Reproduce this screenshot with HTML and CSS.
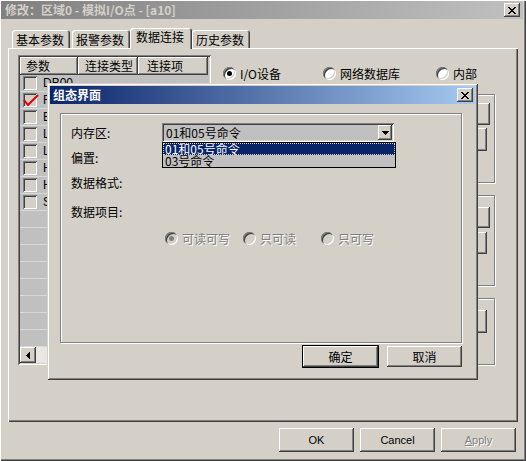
FILE: index.html
```
<!DOCTYPE html>
<html>
<head>
<meta charset="utf-8">
<link rel="stylesheet" href="styles.css">
</head>
<body>
<div class="win">
  <div class="titlebar">
    <span class="title">修改：区域0 - 模拟I/O点 - [a10]</span>
    <span class="capbtn"><svg width="8" height="7" viewBox="0 0 8 7" shape-rendering="crispEdges"><path d="M0 0h2v1h1v1h2v-1h1v-1h2v1h-1v1h-1v1h-1v1h1v1h1v1h1v1h-2v-1h-1v-1h-2v1h-1v1h-2v-1h1v-1h1v-1h1v-1h-1v-1h-1v-1h-1z"/></svg></span>
  </div>
  <div class="tabs">
    <div class="tab">基本参数</div>
    <div class="tab">报警参数</div>
    <div class="tab sel">数据连接</div>
    <div class="tab">历史参数</div>
  </div>
  <div class="panel">
    <div class="list">
      <div class="lhead">
        <div class="hc c1">参数</div>
        <div class="hc c2">连接类型</div>
        <div class="hc c3">连接项</div>
      </div>
      <div class="lbody">
        <div class="row"><span class="chk"></span><span class="rt">DB00</span></div>
        <div class="row"><span class="chk"><svg class="tick" width="16" height="13" viewBox="0 0 16 13"><polyline points="1,6 5,11 15,1" fill="none" stroke="#e00000" stroke-width="2"/></svg></span><span class="rt">F</span></div>
        <div class="row"><span class="chk"></span><span class="rt">E</span></div>
        <div class="row"><span class="chk"></span><span class="rt">L</span></div>
        <div class="row"><span class="chk"></span><span class="rt">L</span></div>
        <div class="row"><span class="chk"></span><span class="rt">H</span></div>
        <div class="row"><span class="chk"></span><span class="rt">H</span></div>
        <div class="row"><span class="chk"></span><span class="rt">S</span></div>
        <div class="row"></div>
        <div class="row"></div>
        <div class="row"></div>
        <div class="row"></div>
        <div class="row"></div>
        <div class="row"></div>
        <div class="row"></div>
        <div class="row"></div>
      </div>
      <div class="hscroll">
        <span class="sbtn"><svg width="4" height="7" viewBox="0 0 4 7" shape-rendering="crispEdges"><path d="M3 0h1v7h-1v-1h-1v-1h-1v-1h-1v-1h1v-1h1v-1h1z"/></svg></span>
        <span class="track"></span>
      </div>
    </div>
    <div class="side">
      <div class="src">
        <label class="radio r1"><i class="dot on"></i>I/O设备</label>
        <label class="radio r2"><i class="dot"></i>网络数据库</label>
        <label class="radio"><i class="dot"></i>内部</label>
      </div>
      <div class="grp g1">
        <div class="btn gb1"></div>
        <div class="btn gb2"></div>
      </div>
      <div class="grp g2">
        <div class="btn gb3"></div>
        <div class="btn gb4"></div>
      </div>
      <div class="grp g3">
        <div class="btn gb5"></div>
      </div>
    </div>
  </div>
  <div class="footer">
    <div class="btn fbtn">OK</div>
    <div class="btn fbtn">Cancel</div>
    <div class="btn fbtn dis"><u>A</u>pply</div>
  </div>

  <div class="dlg">
    <div class="dtitle">
      <span>组态界面</span>
      <span class="capbtn"><svg width="8" height="7" viewBox="0 0 8 7" shape-rendering="crispEdges"><path d="M0 0h2v1h1v1h2v-1h1v-1h2v1h-1v1h-1v1h-1v1h1v1h1v1h1v1h-2v-1h-1v-1h-2v1h-1v1h-2v-1h1v-1h1v-1h1v-1h-1v-1h-1v-1h-1z"/></svg></span>
    </div>
    <div class="dgrp">
      <div class="frow">
        <span class="flabel">内存区:</span>
        <div class="combo">
          <span class="ctext">01和05号命令</span>
          <span class="cbtn"><svg width="7" height="4" viewBox="0 0 7 4" shape-rendering="crispEdges"><path d="M0 0h7v1h-1v1h-1v1h-1v1h-1v-1h-1v-1h-1v-1h-1z"/></svg></span>
          <div class="drop">
            <div class="opt hl">01和05号命令</div>
            <div class="opt">03号命令</div>
          </div>
        </div>
      </div>
      <div class="frow f2"><span class="flabel">偏置:</span></div>
      <div class="frow f3"><span class="flabel">数据格式:</span></div>
      <div class="frow f4"><span class="flabel">数据项目:</span></div>
      <div class="frow f5">
        <label class="radio dr"><i class="dot dis on"></i><span class="gtext">可读可写</span></label>
        <label class="radio dr"><i class="dot dis"></i><span class="gtext">只可读</span></label>
        <label class="radio"><i class="dot dis"></i><span class="gtext">只可写</span></label>
      </div>
    </div>
    <div class="dbtns">
      <div class="btn dbtn def">确定</div>
      <div class="btn dbtn">取消</div>
    </div>
  </div>
</div>
</body>
</html>
```
FILE: styles.css
```
* { box-sizing: border-box; margin: 0; padding: 0; }
html, body { width: 526px; height: 461px; overflow: hidden; }
body {
  background: #d4d0c8;
  font-family: "Noto Sans CJK SC", "Liberation Sans", sans-serif;
  font-size: 12px;
  line-height: 12px;
  color: #000;
}

.win {
  position: relative;
  width: 526px;
  height: 461px;
  padding: 1px 3px 3px 1px;
  box-shadow: inset 1px 1px #fff, inset -1px -1px #404040, inset -2px -2px #808080;
}

.titlebar {
  height: 18px;
  display: flex;
  align-items: center;
  justify-content: space-between;
  padding: 0 3px 0 4px;
  background: linear-gradient(90deg, #808080, #c0c0c0);
}
.title { color: #d4d0c8; font-weight: bold; }

.capbtn {
  width: 16px;
  height: 14px;
  display: flex;
  align-items: center;
  justify-content: center;
  background: #d4d0c8;
  box-shadow: inset -1px -1px #404040, inset 1px 1px #fff, inset -2px -2px #808080;
}
.capbtn svg { display: block; }

.btn {
  background: #d4d0c8;
  box-shadow: inset -1px -1px #404040, inset 1px 1px #fff, inset -2px -2px #808080;
}

/* tabs */
.tabs {
  display: flex;
  align-items: flex-end;
  height: 20px;
  margin-top: 9px;
  padding-left: 11px;
  position: relative;
  z-index: 1;
}
.tab {
  width: 58px;
  height: 18px;
  margin-right: 2px;
  padding: 4px 0 0 4px;
  background: #d4d0c8;
  border-radius: 3px 3px 0 0;
  box-shadow: inset 1px 1px #fff, inset -1px 0 #404040, inset -2px 0 #808080;
}
.tab.sel {
  width: 62px;
  height: 21px;
  margin: 0 0 -1px -2px;
  padding: 3px 0 0 6px;
}

/* tab panel */
.panel {
  margin-left: 7px;
  width: 510px;
  height: 374px;
  padding: 1px;
  display: flex;
  align-items: flex-start;
  box-shadow: inset 1px 1px #fff, inset -1px -1px #404040, inset -2px -2px #808080;
}

.list {
  margin: 6px 0 0 9px;
  width: 193px;
  height: 310px;
  padding: 2px;
  background: #c0c0c0;
  display: flex;
  flex-direction: column;
  box-shadow: inset 1px 1px #808080, inset -1px -1px #fff, inset 2px 2px #404040, inset -2px -2px #d4d0c8;
}
.lhead { display: flex; height: 18px; flex: none; }
.hc {
  height: 18px;
  padding: 3px 0 0 6px;
  background: #d4d0c8;
  box-shadow: inset -1px -1px #404040, inset 1px 1px #fff, inset -2px -2px #808080;
}
.c1 { width: 58px; }
.c2 { width: 60px; padding-left: 7px; }
.c3 { width: 70px; padding-left: 9px; }
.lbody { flex: 1; overflow: hidden; }
.row {
  height: 17px;
  border-bottom: 1px solid #d8d8d8;
  display: flex;
  align-items: center;
  padding-left: 3px;
}
.chk {
  position: relative;
  width: 14px;
  height: 14px;
  background: #d4d0c8;
  box-shadow: inset 1px 1px #808080, inset -1px -1px #fff, inset 2px 2px #404040, inset -2px -2px #d4d0c8;
}
.tick { position: absolute; left: 0; top: 1px; }
.rt { margin-left: 6px; font-family: "Liberation Sans", sans-serif; font-size: 12px; }

.hscroll { height: 16px; display: flex; flex: none; }
.sbtn {
  width: 16px;
  height: 16px;
  display: flex;
  align-items: center;
  justify-content: center;
  background: #d4d0c8;
  box-shadow: inset -1px -1px #404040, inset 1px 1px #fff, inset -2px -2px #808080;
}
.sbtn svg { display: block; margin-left: -1px; }
.track { flex: 1; background: #e9e7e3; }

/* right side */
.side {
  margin-left: 11px;
  width: 273px;
  display: flex;
  flex-direction: column;
}
.src {
  display: flex;
  align-items: center;
  height: 13px;
  margin-top: 18px;
}
.radio { display: flex; align-items: center; gap: 4px; }
.r1 { width: 100px; margin-left: 1px; }
.r2 { width: 113px; }
.dot {
  position: relative;
  display: block;
  width: 13px;
  height: 13px;
  border-radius: 50%;
  background: #fff;
  box-shadow: inset 1px 1px #808080, inset -1px -1px #fff, inset 2px 2px #404040, inset -2px -2px #d4d0c8;
}
.dot.on::after {
  content: "";
  position: absolute;
  left: 4px;
  top: 4px;
  width: 5px;
  height: 5px;
  border-radius: 50%;
  background: #000;
}
.dot.dis { background: #d4d0c8; }
.dot.dis.on::after { background: #808080; }

.grp {
  border: 1px solid #808080;
  box-shadow: 1px 1px #fff, inset 1px 1px #fff;
  display: flex;
  flex-direction: column;
  align-items: flex-end;
}
.g1 { margin-top: 14px; height: 89px; }
.g2 { margin-top: 12px; height: 91px; }
.g3 { margin-top: 12px; height: 67px; }
.gb1 { width: 60px; height: 22px; margin: 8px 4px 0 0; }
.gb2 { width: 60px; height: 23px; margin: 3px 7px 0 0; }
.gb3 { width: 60px; height: 21px; margin: 11px 4px 0 0; }
.gb4 { width: 60px; height: 22px; margin: 4px 7px 0 0; }
.gb5 { width: 60px; height: 23px; margin: 11px 7px 0 0; }

/* footer */
.footer {
  display: flex;
  justify-content: flex-end;
  gap: 6px;
  margin-top: 6px;
  padding-right: 7px;
}
.fbtn {
  width: 75px;
  height: 24px;
  display: flex;
  align-items: center;
  justify-content: center;
  font-family: "Liberation Sans", sans-serif;
  font-size: 11px;
}
.fbtn.dis { color: #808080; text-shadow: 1px 1px #fff; }

/* dialog */
.dlg {
  position: absolute;
  left: 47px;
  top: 83px;
  width: 431px;
  height: 297px;
  padding: 3px;
  background: #d4d0c8;
  z-index: 5;
  box-shadow: inset 1px 1px #d4d0c8, inset -1px -1px #404040, inset 2px 2px #fff, inset -2px -2px #808080;
}
.dtitle {
  height: 18px;
  display: flex;
  align-items: center;
  justify-content: space-between;
  padding: 0 2px 0 3px;
  background: linear-gradient(90deg, #0a246a, #a6caf0);
  color: #fff;
  font-weight: bold;
}
.dgrp {
  margin: 9px 0 0 10px;
  width: 402px;
  height: 230px;
  padding: 9px 0 0 10px;
  border: 1px solid #808080;
  box-shadow: 1px 1px #fff, inset 1px 1px #fff;
}
.frow { display: flex; align-items: center; height: 19px; }
.f2 { margin-top: 6px; }
.f3 { margin-top: 6px; }
.f4 { margin-top: 10px; }
.f5 { margin-top: 8px; padding-left: 94px; }
.flabel { width: 91px; flex: none; }

.combo {
  position: relative;
  width: 232px;
  height: 19px;
  padding: 2px;
  display: flex;
  align-items: center;
  background: #c0c0c0;
  box-shadow: inset 1px 1px #808080, inset -1px -1px #fff, inset 2px 2px #404040, inset -2px -2px #d4d0c8;
}
.ctext { flex: 1; padding-left: 2px; }
.cbtn {
  width: 14px;
  height: 15px;
  display: flex;
  align-items: center;
  justify-content: center;
  background: #d4d0c8;
  box-shadow: inset -1px -1px #404040, inset 1px 1px #fff, inset -2px -2px #808080;
}
.cbtn svg { display: block; }
.drop {
  position: absolute;
  left: 0;
  top: 19px;
  width: 234px;
  height: 26px;
  border: 1px solid #000;
  background: #c0c0c0;
}
.opt { height: 12px; line-height: 12px; padding-left: 2px; }
.opt.hl {
  background: #0a246a;
  color: #fff;
  outline: 1px dotted #d4d0c8;
  outline-offset: -1px;
}

.dr { width: 78px; }
.gtext { color: #808080; text-shadow: 1px 1px #fff; }

.dbtns {
  display: flex;
  justify-content: flex-end;
  gap: 9px;
  width: 402px;
  margin: 3px 0 0 10px;
}
.dbtn {
  width: 75px;
  height: 21px;
  display: flex;
  align-items: center;
  justify-content: center;
}
.dbtn.def {
  box-shadow: 0 0 0 1px #000, inset -1px -1px #404040, inset 1px 1px #fff, inset -2px -2px #808080;
}
```
